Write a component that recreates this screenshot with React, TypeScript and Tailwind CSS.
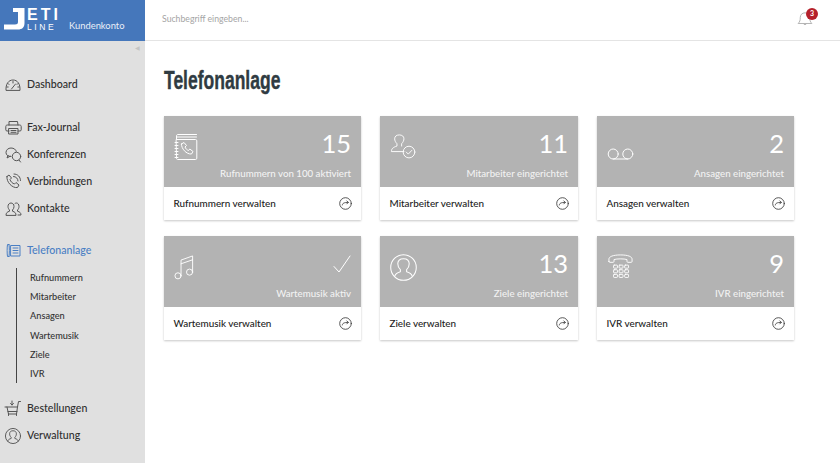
import React from "react";

const S = { fill: "none", stroke: "currentColor", strokeWidth: 1, strokeLinecap: "round" as const, strokeLinejoin: "round" as const };

const Gauge = () => (
  <svg width="16" height="12" viewBox="0 0 16 12" {...S}>
    <path d="M1 11C.6 5 3.500 1 8 1s7.400 4 7 10z" />
    <path d="M3 4.500l1 1M8 2.500v1.500M13 4.500l-1 1M2 8h1.200M14 8h-1.200M6.500 10L10.500 5" />
  </svg>
);
const Printer = () => (
  <svg width="17" height="15" viewBox="0 0 17 15" {...S}>
    <path d="M4 5V1.500h8.500l.5 3.500" />
    <path d="M4 11H2c-.8 0-1.200-.5-1.200-1.200V6.500C.8 5.600 1.400 5 2.300 5h12.400c.9 0 1.500.6 1.500 1.500v3.300c0 .7-.4 1.200-1.200 1.200H13" />
    <path d="M4 8.500h9V14H4zM6 10.500h5M6 12.300h5" />
  </svg>
);
const Chat = () => (
  <svg width="17" height="16" viewBox="0 0 17 16" {...S}>
    <path d="M6 9.500C3 9.500 1 8 1 5.500S3.200 1 6 1s5 1.500 5.300 3.500" />
    <path d="M3 8.500L2 11l3-1.700" />
    <circle cx="11.500" cy="9.500" r="4.200" />
    <path d="M14 13l1.500 2" />
  </svg>
);
const PhoneWaves = () => (
  <svg width="17" height="17" viewBox="0 0 17 17" {...S}>
    <path d="M2 3.500L4 2l2.500 3-1.500 1.500c.5 2 2.500 4 4.500 4.500L11 9.500l3 2.500-1.500 2.500C7.500 15.500 1 9 2 3.500z" />
    <path d="M8.500 3.500c2.500 0 4.500 2 4.500 4.500M9 1c3.800 0 6.500 3 6.500 6.500" />
  </svg>
);
const People = () => (
  <svg width="17" height="14" viewBox="0 0 17 14" {...S}>
    <path d="M1 13c0-2 1-3 3.500-3.800V8C3.500 7 3 5.800 3 4.500 3 2.500 4.200 1 6 1s3 1.500 3 3.500C9 5.800 8.500 7 7.500 8v1.200C10 10 11 11 11 13z" />
    <path d="M10 1.500c.4-.3.8-.5 1.300-.5C13 1 14 2.500 14 4.500c0 1.300-.5 2.500-1.500 3.500v1.200c2.500.8 3.500 1.800 3.500 3.800h-3" />
  </svg>
);
const Desk = () => (
  <svg width="15" height="15" viewBox="0 0 15 15" {...S}>
    <path d="M3 1.500H1.500C1 4 1 11 1.500 13.500H3M3 1.500c.5 3 .5 9 0 12" />
    <path d="M5 2.500h9v10.500H5zM7 5h5M7 7.500h5M7 10h5" />
  </svg>
);
const Cart = () => (
  <svg width="18" height="17" viewBox="0 0 18 17" {...S}>
    <path d="M1 7h12.500l1-5.500h2M3 7l1.500 7h8L13.500 7M4 11.500h9" />
    <path d="M8 1v4M6.500 3.500L8 5l1.500-1.500" />
    <path d="M4.500 14v1.500M12.500 14v1.500" />
  </svg>
);
const UserCircle = ({ size = 16 }: { size?: number }) => (
  <svg width={size} height={size} viewBox="0 0 26 26" {...S} strokeWidth={26 / size > 1.2 ? 1.5 : 1}>
    <circle cx="13" cy="13" r="12.300" />
    <path d="M4.500 21.500c.5-2.500 2-3.500 5.500-4.500v-2c-1.500-1.200-2.500-3-2.500-5.500C7.500 6 9.800 4.500 13 4.500s5.500 1.500 5.500 5c0 2.500-1 4.300-2.500 5.500v2c3.500 1 5 2 5.500 4.500" />
  </svg>
);

const Book = () => (
  <svg width="24" height="28" viewBox="0 0 24 28" {...S}>
    <path d="M2.500 6V3C2.500 2 3 1.500 4 1.500h18.500M3 4h19.500" />
    <path d="M2.500 6.500h19c.8 0 1.300.5 1.300 1.300v17.400c0 .8-.5 1.300-1.300 1.300h-18c-.6 0-1-.4-1-1z" />
    <path d="M1 9.500h3M1 12.500h3M1 15.500h3M1 18.500h3M1 21.500h3M1 24.500h3" />
    <path d="M7.500 11l2.500-1.500 2.500 3-1.500 1.500c.5 1.500 2 3 3.500 3.500l1.300-1.500 3.200 2.500-1.500 2.500c-5 .5-10.500-5.500-10-10z" />
  </svg>
);
const UserCheck = () => (
  <svg width="26" height="25" viewBox="0 0 28 27" {...S}>
    <path d="M15 19H1.500c0-3 1.500-4.500 6-6v-2.500C6 9 5 7 5 5.200 5 2.500 7 1 10 1s5 1.500 5 4.200c0 1.800-1 3.800-2.500 5.300V13" />
    <circle cx="20.500" cy="19.500" r="6.300" />
    <path d="M17.500 19.500l2.200 2.200 3.800-4" />
  </svg>
);
const Voicemail = () => (
  <svg width="27" height="12" viewBox="0 0 27 12" {...S}>
    <circle cx="6.200" cy="6" r="5" />
    <circle cx="20.800" cy="6" r="5" />
    <path d="M6.200 11h14.600" />
  </svg>
);
const Music = () => (
  <svg width="20" height="25" viewBox="0 0 21 27" {...S}>
    <circle cx="4" cy="22.500" r="3.300" />
    <circle cx="16.500" cy="18.500" r="3.300" />
    <path d="M7.300 22.500V5.500L19.800 1v17.500M7.300 9.500l12.500-4.300" />
  </svg>
);
const Handset = () => (
  <svg width="27" height="25" viewBox="0 0 27 27" {...S}>
    <path d="M1 8V5.500C1 3 5 1 13.500 1S26 3 26 5.500V8c0 .6-.4 1-1 1h-3.500c-.6 0-1-.4-1-1V6c-3-1-11-1-14 0v2c0 .6-.4 1-1 1H2c-.6 0-1-.4-1-1z" />
    {[6, 12, 18].flatMap((x) =>
      [12, 17, 22].map((y) => <rect key={`${x}-${y}`} x={x} y={y} width="4.200" height="3.300" rx=".7" />)
    )}
  </svg>
);
const Check = () => (
  <svg width="18" height="18" viewBox="0 0 18 18" {...S}>
    <path d="M1 11.500L6 17 17 1" />
  </svg>
);
const GoArrow = () => (
  <svg width="13" height="13" viewBox="0 0 13 13" fill="none" stroke="#444" strokeWidth="0.9" strokeLinecap="round" strokeLinejoin="round">
    <circle cx="6.500" cy="6.500" r="5.800" />
    <path d="M3.300 8c.2-1.700 1.500-2.600 5.900-2.600M7.800 3.900l1.500 1.500-1.500 1.500" />
  </svg>
);
const Bell = () => (
  <svg width="16" height="17" viewBox="0 0 16 18" fill="none" stroke="#b0b0b0" strokeWidth="1" strokeLinecap="round" strokeLinejoin="round">
    <path d="M1 14c1.500-1.500 2-3 2-6 0-3 2-5 5-5s5 2 5 5c0 3 .5 4.500 2 6z" />
    <path d="M6.500 14.500c.2 1.500 2.800 1.500 3 0" />
  </svg>
);

const nav1 = [
  { label: "Fax-Journal", icon: <Printer /> },
  { label: "Konferenzen", icon: <Chat /> },
  { label: "Verbindungen", icon: <PhoneWaves /> },
  { label: "Kontakte", icon: <People /> },
];
const sub = ["Rufnummern", "Mitarbeiter", "Ansagen", "Wartemusik", "Ziele", "IVR"];

const cards = [
  { icon: <Book />, num: "15", label: "Rufnummern von 100 aktiviert", link: "Rufnummern verwalten", top: "pt-[17px]" },
  { icon: <UserCheck />, num: "11", label: "Mitarbeiter eingerichtet", link: "Mitarbeiter verwalten", top: "pt-[18px]" },
  { icon: <Voicemail />, num: "2", label: "Ansagen eingerichtet", link: "Ansagen verwalten", top: "pt-[32px]" },
  { icon: <Music />, num: null, label: "Wartemusik aktiv", link: "Wartemusik verwalten", top: "pt-[19px]" },
  { icon: <UserCircle size={27} />, num: "13", label: "Ziele eingerichtet", link: "Ziele verwalten", top: "pt-[18px]" },
  { icon: <Handset />, num: "9", label: "IVR eingerichtet", link: "IVR verwalten", top: "pt-[18px]" },
];

function NavRow({ icon, label, active }: { icon: React.ReactNode; label: string; active?: boolean }) {
  return (
    <div className={`flex h-[27px] items-center ${active ? "text-[#4a7fc4]" : "text-[#2f2f2f]"}`}>
      <span className={`flex w-[27px] shrink-0 justify-center pr-[1px] ${active ? "text-[#4a7fc4]" : "text-[#555]"}`}>{icon}</span>
      <span className="text-[10.600px] font-medium">{label}</span>
    </div>
  );
}

export default function App() {
  return (
    <div className="flex h-[463px] w-[840px] overflow-hidden bg-white font-['Lato',sans-serif]">
      <aside className="flex w-[145px] shrink-0 flex-col bg-[#e0e0e0]">
        <div className="flex h-[41px] items-start bg-[#4577bb] pl-[4px] pt-[8px] text-white">
          <svg width="21" height="22" viewBox="0 0 21 22" className="shrink-0">
            <path d="M9 0h11.500v15c0 4.500-2.500 6.500-6.500 6.500H0v-5h11c2 0 3-.8 3-2.500V4H9z" fill="white" />
          </svg>
          <div className="ml-[2px] flex w-[34px] shrink-0 flex-col font-['Liberation_Sans',sans-serif]">
            <span className="h-[14px] whitespace-nowrap text-[16px] font-bold leading-[14px] tracking-[3px]">ETI</span>
            <span className="mt-[2px] whitespace-nowrap text-[8.500px] leading-[7px] tracking-[2.600px]">LINE</span>
          </div>
          <span className="ml-[8px] mt-[11px] whitespace-nowrap text-[9.400px] leading-[14px] text-[#e8eef7]">Kundenkonto</span>
        </div>
        <div className="flex h-[16px] justify-end pr-[5px] pt-[3px] text-[6px] leading-[8px] text-[#c4c4c4]">◀</div>
        <nav className="flex flex-col pt-[14px]">
          <NavRow icon={<Gauge />} label="Dashboard" />
          <div className="mt-[16px] flex flex-col">
            {nav1.map((n) => (
              <NavRow key={n.label} icon={n.icon} label={n.label} />
            ))}
          </div>
          <div className="mt-[15px]">
            <NavRow icon={<Desk />} label="Telefonanlage" active />
          </div>
          <ul className="ml-[16px] mt-[4px] flex h-[115px] flex-col justify-between border-l border-[#444] pb-[2px] pl-[13px] pt-[3px] text-[9.200px] font-medium text-[#333]">
            {sub.map((s) => (
              <li key={s} className="leading-[14px]">{s}</li>
            ))}
          </ul>
          <div className="mt-[12px] flex flex-col">
            <NavRow icon={<Cart />} label="Bestellungen" />
            <NavRow icon={<UserCircle />} label="Verwaltung" />
          </div>
        </nav>
      </aside>
      <div className="flex min-w-0 flex-1 flex-col">
        <header className="flex h-[41px] items-center justify-between border-b border-[#e4e4e4] pb-[3px] pl-[17px] pr-[27px]">
          <span className="text-[8.700px] text-[#a5a5a5]">Suchbegriff eingeben...</span>
          <span className="relative flex h-[20px] w-[16px] items-center">
            <Bell />
            <span className="absolute right-[-5px] top-[-1px] flex h-[12px] w-[12px] items-center justify-center rounded-full bg-[#b5202a] text-[7px] font-bold text-white">3</span>
          </span>
        </header>
        <main className="pl-[19px]">
          <h1 className="mt-[24px] h-[31px] origin-left scale-x-[0.7] whitespace-nowrap font-['Liberation_Sans',sans-serif] text-[25px] font-bold leading-[31px] text-[#2f3b42] [-webkit-text-stroke:0.4px_#2f3b42]">Telefonanlage</h1>
          <div className="mt-[20px] grid w-[630px] grid-cols-[197px_198px_197px] gap-x-[19px] gap-y-[16px]">
            {cards.map((c) => (
              <div key={c.link} className="bg-white shadow-[0_1px_2px_rgba(0,0,0,0.22)]">
                <div className="flex h-[71px] justify-between bg-[#b3b3b3] pl-[10px] pr-[10px] text-white">
                  <div className={c.top}>{c.icon}</div>
                  <div className="flex flex-col items-end">
                    <div className="flex h-[46px] items-center pt-[9px]">
                      {c.num ? <span className="text-[25.500px] leading-none">{c.num}</span> : <Check />}
                    </div>
                    <span className="text-[9.700px] font-medium leading-[22px] text-[#f2f2f2]">{c.label}</span>
                  </div>
                </div>
                <div className="flex h-[33px] items-center justify-between px-[9.500px]">
                  <span className="text-[9.900px] font-medium text-[#222]">{c.link}</span>
                  <GoArrow />
                </div>
              </div>
            ))}
          </div>
        </main>
      </div>
    </div>
  );
}
